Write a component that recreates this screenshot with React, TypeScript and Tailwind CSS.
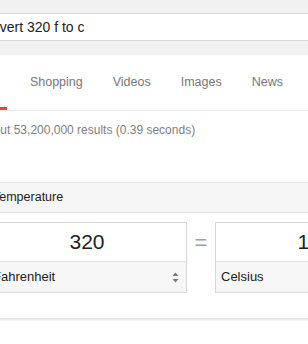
const tabs = ["Videos", "Images", "News"];

function UpDown() {
  return (
    <svg width="7" height="11" viewBox="0 0 7 11" className="shrink-0">
      <path d="M3.5 0.5 L6.5 4 L0.5 4 Z" fill="#7a7a7a" />
      <path d="M3.5 10.5 L6.5 7 L0.5 7 Z" fill="#7a7a7a" />
    </svg>
  );
}

function UnitBox({ value, unit, arrows }: { value: string; unit: string; arrows?: boolean }) {
  return (
    <div className="w-[200px] shrink-0 border border-[#d9d9d9] bg-white">
      <div className="flex h-[39px] items-center justify-center border-b border-[#e3e3e3] text-[21px] text-[#222]">
        {value}
      </div>
      <div className="flex h-[30px] items-center justify-between bg-[#f7f7f7] pl-[5px] pr-[7px] text-[13px] text-[#222]">
        <span>{unit}</span>
        {arrows && <UpDown />}
      </div>
    </div>
  );
}

export default function App() {
  return (
    <div className="h-[344px] w-[308px] overflow-hidden bg-white font-['Liberation_Sans',Arial,sans-serif]">
      {/* search bar */}
      <div className="h-[55px] bg-[#f1f1f1] pt-[13px]">
        <div className="ml-[-40px] flex h-[28px] w-[400px] items-center border border-[#d9d9d9] bg-white pl-[13px] text-[14px] text-[#222]">
          Convert 320 f to c
        </div>
      </div>

      {/* tabs */}
      <div className="flex h-[56px] w-[400px] items-stretch border-b border-[#ebebeb] text-[12.5px] text-[#777]">
        <div className="ml-[-20px] flex items-center border-b-[3px] border-[#dd4b39] pl-[6px] pr-[7px] pt-[3px] text-[#dd4b39]">
          All
        </div>
        <div className="ml-[23px] flex items-center">Shopping</div>
        {tabs.map((t) => (
          <div key={t} className="ml-[30px] flex items-center">
            {t}
          </div>
        ))}
      </div>

      {/* results count */}
      <div className="h-[71px] pt-[12px]">
        <div className="ml-[-21px] whitespace-nowrap text-[12px] leading-[15px] text-[#808080]">
          About 53,200,000 results (0.39 seconds)
        </div>
      </div>

      {/* converter card */}
      <div className="ml-[-24px] w-[470px] border border-[#e6e6e6] shadow-[0_1px_2px_rgba(0,0,0,0.12)]">
        <div className="flex h-[30px] items-center border-b border-[#e3e3e3] bg-[#f5f5f5] pl-[16px] text-[12.5px] text-[#222]">
          Temperature
        </div>
        <div className="flex items-start pb-[25px] pl-[10px] pt-[9px]">
          <UnitBox value="320" unit="Fahrenheit" arrows />
          <div className="flex h-[41px] w-[28px] shrink-0 items-center justify-center text-[22px] text-[#a0a0a0]">
            =
          </div>
          <UnitBox value="160" unit="Celsius" arrows />
        </div>
      </div>
    </div>
  );
}
